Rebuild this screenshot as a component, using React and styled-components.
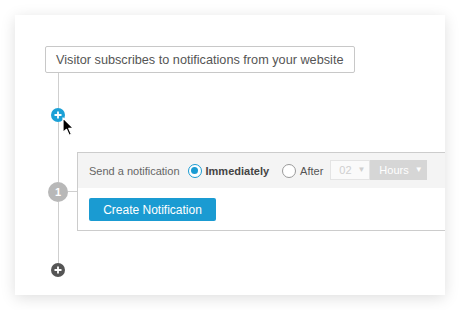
import React from "react";
import styled, { createGlobalStyle } from "styled-components";

const GlobalStyle = createGlobalStyle`
  html, body {
    margin: 0;
    padding: 0;
    background: #ffffff;
    font-family: "Liberation Sans", Arial, Helvetica, sans-serif;
  }
`;

const Page = styled.div`
  width: 460px;
  height: 310px;
  padding: 15px;
  box-sizing: border-box;
`;

const Card = styled.div`
  position: relative;
  width: 430px;
  height: 280px;
  background: #fff;
  box-shadow: 0 3px 14px rgba(0, 0, 0, 0.13);
  overflow: hidden;
  padding: 31px 0 0 33px;
  box-sizing: border-box;
  display: flex;
  flex-direction: column;
  align-items: flex-start;
`;

const Trigger = styled.div`
  margin-left: -3px;
  width: 310px;
  height: 27px;
  box-sizing: border-box;
  border: 1px solid #c8c8c8;
  border-radius: 2px;
  padding: 0 10px;
  display: flex;
  align-items: center;
  font-size: 12.7px;
  color: #555;
  white-space: nowrap;
`;

const Rail = styled.div`
  width: 20px;
  height: ${(p) => p.$h}px;
  display: flex;
  justify-content: center;
  &::before {
    content: "";
    width: 1px;
    height: 100%;
    background: #cfcfcf;
  }
`;

const Gutter = styled.div`
  width: 20px;
  display: flex;
  flex-direction: column;
  align-items: center;
  align-self: stretch;
`;

const GutterLine = styled.div`
  flex: 1;
  width: 1px;
  background: #cfcfcf;
`;

const PlusDot = styled.div`
  width: 20px;
  display: flex;
  justify-content: center;
  svg {
    display: block;
  }
`;

const StepRow = styled.div`
  display: flex;
  align-items: center;
`;

const StepBadge = styled.div`
  width: 20px;
  height: 20px;
  border-radius: 50%;
  background: #b8b8b8;
  color: #fff;
  font-size: 11px;
  font-weight: bold;
  display: flex;
  align-items: center;
  justify-content: center;
  flex-shrink: 0;
`;

const Connector = styled.div`
  width: 9px;
  height: 1px;
  background: #cfcfcf;
  flex-shrink: 0;
`;

const Panel = styled.div`
  width: 420px;
  flex-shrink: 0;
  border: 1px solid #cccccc;
  box-sizing: border-box;
  height: 79px;
  display: flex;
  flex-direction: column;
`;

const PanelHead = styled.div`
  height: 35px;
  flex-shrink: 0;
  background: #f4f4f4;
  display: flex;
  align-items: center;
  padding-left: 11px;
  font-size: 11px;
  color: #666;
  white-space: nowrap;
`;

const Label = styled.span`
  margin-right: 8px;
`;

const Radio = styled.span`
  width: 14px;
  height: 14px;
  box-sizing: border-box;
  border-radius: 50%;
  border: ${(p) => (p.$on ? "1.5px solid #1a9bd2" : "1px solid #9a9a9a")};
  background: #fff;
  display: inline-flex;
  align-items: center;
  justify-content: center;
  margin-right: 4px;
  &::after {
    content: "";
    width: 7px;
    height: 7px;
    border-radius: 50%;
    background: ${(p) => (p.$on ? "#1a9bd2" : "transparent")};
  }
`;

const Option = styled.span`
  color: ${(p) => (p.$on ? "#444" : "#555")};
  font-weight: ${(p) => (p.$on ? "bold" : "normal")};
  margin-right: ${(p) => p.$mr}px;
`;

const Select = styled.span`
  height: 20px;
  box-sizing: border-box;
  display: inline-flex;
  align-items: center;
  padding: 0 8px;
  width: ${(p) => p.$w}px;
  font-size: 11px;
  color: ${(p) => (p.$filled ? "#fff" : "#cfcfcf")};
  background: ${(p) => (p.$filled ? "#d6d6d6" : "#fafafa")};
  border: 1px solid ${(p) => (p.$filled ? "#d6d6d6" : "#e4e4e4")};
  margin-top: -2px;
  span {
    margin-left: 6px;
    font-size: 8px;
  }
`;

const PanelBody = styled.div`
  padding: 10px 11px;
`;

const Button = styled.button`
  display: block;
  height: 23px;
  width: 127px;
  border: none;
  border-radius: 2px;
  background: #1a9bd2;
  color: #fff;
  font-family: inherit;
  font-size: 12px;
  padding: 0;
  cursor: pointer;
`;

const Cursor = styled.svg`
  position: absolute;
  left: 47px;
  top: 102px;
`;

function PlusIcon({ color }) {
  return (
    <PlusDot>
      <svg width="14" height="14" viewBox="0 0 14 14">
        <circle cx="7" cy="7" r="7" fill={color} />
        <path d="M7 3.5v7M3.5 7h7" stroke="#fff" strokeWidth="1.8" />
      </svg>
    </PlusDot>
  );
}

export default function App() {
  return (
    <Page>
      <GlobalStyle />
      <Card>
        <Trigger>Visitor subscribes to notifications from your website</Trigger>
        <Rail $h={35} />
        <PlusIcon color="#1ba0d6" />
        <Rail $h={30} />
        <StepRow>
          <Gutter>
            <GutterLine />
            <StepBadge>1</StepBadge>
            <GutterLine />
          </Gutter>
          <Connector />
          <Panel>
            <PanelHead>
              <Label>Send a notification</Label>
              <Radio $on />
              <Option $on $mr={13}>Immediately</Option>
              <Radio />
              <Option $mr={7}>After</Option>
              <Select $w={40}>
                02<span>▼</span>
              </Select>
              <Select $w={57} $filled>
                Hours<span>▼</span>
              </Select>
            </PanelHead>
            <PanelBody>
              <Button>Create Notification</Button>
            </PanelBody>
          </Panel>
        </StepRow>
        <Rail $h={32} />
        <PlusIcon color="#555555" />
        <Cursor width="14" height="20" viewBox="0 0 14 20">
          <path
            d="M1 1 L1 15.5 L4.5 12.3 L7.2 18.3 L9.4 17.3 L6.8 11.4 L11.4 11.4 Z"
            fill="#000"
            stroke="#fff"
            strokeWidth="1.2"
            strokeLinejoin="round"
          />
        </Cursor>
      </Card>
    </Page>
  );
}
